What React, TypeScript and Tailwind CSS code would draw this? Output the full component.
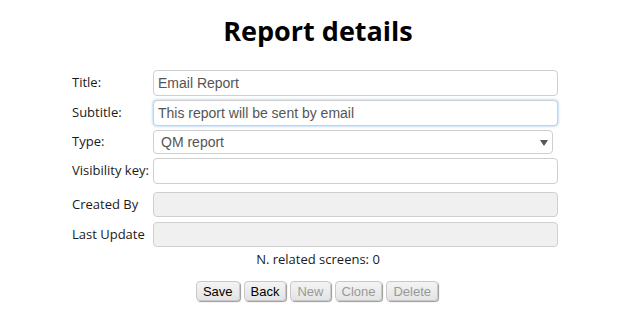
import React from "react";

const labelCls = "w-[81px] shrink-0 text-[13px] text-[#1a1a1a] font-['Open_Sans',sans-serif]";
const inputBase =
  "w-[406px] rounded-[4px] border border-[#cfcfcf] px-[4px] text-[14px] text-[#555] font-['Liberation_Sans',Arial,sans-serif] outline-none";

function Btn({ children, disabled }: { children: React.ReactNode; disabled?: boolean }) {
  return (
    <button
      disabled={disabled}
      className={
        "h-[20px] rounded-[4px] border border-[#c8c8c8] bg-gradient-to-b from-[#f4f4f4] to-[#e4e4e4] px-[6px] text-[13px] leading-none shadow-[1px_1px_1px_#9a9a9a] font-['Liberation_Sans',Arial,sans-serif] " +
        (disabled ? "text-[#999]" : "text-black")
      }
    >
      {children}
    </button>
  );
}

export default function App() {
  return (
    <div className="w-[636px] h-[325px] bg-white overflow-hidden">
      <h1 className="mt-[12px] text-center text-[27px] leading-[38px] font-bold text-black font-['Open_Sans',sans-serif]">
        Report details
      </h1>
      <div className="ml-[72px] mt-[20px] w-[486px] flex flex-col">
        <div className="flex items-center h-[26px]">
          <span className={labelCls}>Title:</span>
          <input className={inputBase + " h-[26px] bg-white"} defaultValue="Email Report" />
        </div>
        <div className="flex items-center h-[26px] mt-[4px]">
          <span className={labelCls}>Subtitle:</span>
          <input
            className={inputBase + " h-[26px] bg-white border-[#5aa4ec] shadow-[0_0_3px_#8cc3f5]"}
            defaultValue="This report will be sent by email"
          />
        </div>
        <div className="flex items-center h-[24px] mt-[4px]">
          <span className={labelCls}>Type:</span>
          <div className="relative w-[400px] h-[24px] rounded-[4px] border border-[#cfcfcf] bg-white flex items-center pl-[7px] text-[14px] text-[#555] font-['Liberation_Sans',Arial,sans-serif]">
            QM report
            <svg className="absolute right-[4px] top-[9px]" width="8" height="6" viewBox="0 0 8 6">
              <path d="M0 0 L8 0 L4 6 Z" fill="#555" />
            </svg>
          </div>
        </div>
        <div className="flex items-center h-[26px] mt-[4px]">
          <span className={labelCls}>Visibility key:</span>
          <input className={inputBase + " h-[26px] bg-white"} defaultValue="" />
        </div>
        <div className="flex items-center h-[25px] mt-[8px]">
          <span className={labelCls}>Created By</span>
          <input className={inputBase + " h-[25px] bg-[#f0f0f0]"} disabled defaultValue="" />
        </div>
        <div className="flex items-center h-[25px] mt-[5px]">
          <span className={labelCls}>Last Update</span>
          <input className={inputBase + " h-[25px] bg-[#f0f0f0]"} disabled defaultValue="" />
        </div>
      </div>
      <p className="mt-[3px] text-center text-[13px] leading-[18px] text-[#1a1a1a] font-['Open_Sans',sans-serif]">
        N. related screens: 0
      </p>
      <div className="mt-[13px] flex justify-center gap-[4px] pr-[2px]">
        <Btn>Save</Btn>
        <Btn>Back</Btn>
        <Btn disabled>New</Btn>
        <Btn disabled>Clone</Btn>
        <Btn disabled>Delete</Btn>
      </div>
    </div>
  );
}
